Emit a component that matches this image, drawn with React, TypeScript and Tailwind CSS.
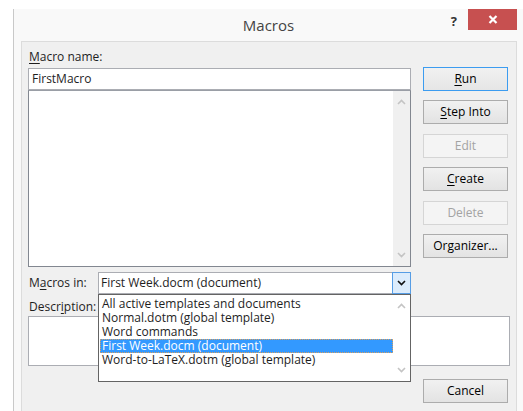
import type { ReactNode } from "react";

const FONT = { fontFamily: '"Open Sans", "Noto Sans", sans-serif' };

// access-key letter, drawn underlined like the Win32 dialogs do
function Key({ children }: { children: ReactNode }) {
  return <span className="underline underline-offset-2 decoration-1">{children}</span>;
}

function Chevron({ up, color = "#c4c4c4" }: { up?: boolean; color?: string }) {
  return (
    <svg width="9" height="6" viewBox="0 0 9 6">
      <path
        d={up ? "M1 5 L4.5 1.5 L8 5" : "M1 1 L4.5 4.5 L8 1"}
        fill="none"
        stroke={color}
        strokeWidth="1.6"
      />
    </svg>
  );
}

function DialogButton({
  children,
  disabled,
  primary,
  className = "",
}: {
  children: ReactNode;
  disabled?: boolean;
  primary?: boolean;
  className?: string;
}) {
  const tone = disabled
    ? "border-[#d5d5d5] bg-[#f4f4f4] text-[#a3a3a3]"
    : primary
      ? "border-[#3c9cf0] bg-gradient-to-b from-[#f1f1f1] to-[#e6e6e6] text-black"
      : "border-[#acacac] bg-gradient-to-b from-[#f1f1f1] to-[#e3e3e3] text-black";
  return (
    <button
      type="button"
      className={`h-[24px] w-[85px] flex items-center justify-center border text-[12px] leading-none ${tone} ${className}`}
    >
      {children}
    </button>
  );
}

function ScrollColumn({ className = "" }: { className?: string }) {
  return (
    <div className={`w-[17px] flex flex-col items-center justify-between py-[8px] ${className}`}>
      <Chevron up />
      <Chevron />
    </div>
  );
}

const locations = [
  "All active templates and documents",
  "Normal.dotm (global template)",
  "Word commands",
  "First Week.docm (document)",
  "Word-to-LaTeX.dotm (global template)",
];

export default function App() {
  return (
    <div className="w-[523px] h-[411px] overflow-hidden bg-white pt-[9px] pl-[13px] text-[#1e1e1e]" style={FONT}>
      <div className="h-full border-l border-[#c9c9c9] bg-[#f9f9f9] flex flex-col">
        {/* title bar */}
        <div className="relative h-[32px] shrink-0 flex items-start justify-end pr-[6px]">
          <div className="absolute inset-x-0 top-[5px] text-center text-[15px] text-[#444]">Macros</div>
          <span className="mt-[3px] mr-[11px] text-[13px] font-bold text-[#333]">?</span>
          <div className="w-[49px] h-[21px] bg-[#c75050] flex items-center justify-center">
            <svg width="10" height="9" viewBox="0 0 10 9">
              <path d="M1.5 1 L8.5 8 M8.5 1 L1.5 8" stroke="#fff" strokeWidth="2.2" />
            </svg>
          </div>
        </div>

        {/* dialog body */}
        <div className="ml-[7px] mr-[6px] flex-1 bg-[#f0f0f0] border-t border-x border-[#dcdcdc] pl-[6px] pt-[7px]">
          <div className="flex gap-[12px]">
            <div className="w-[383px] flex flex-col">
              <div className="h-[16px] leading-[16px] text-[12px] pl-[1px]">
                <Key>M</Key>acro name:
              </div>
              <div className="mt-[3px] h-[22px] border border-[#abadb3] bg-white flex items-center pl-[3px] text-[12px]">
                FirstMacro
              </div>
              <div className="h-[177px] border border-[#828790] border-t-[#9a9ea6] bg-white flex justify-end">
                <ScrollColumn className="bg-[#f0f0f0]" />
              </div>
            </div>

            <div className="mt-[18px] flex flex-col gap-[9.4px]">
              <DialogButton primary>
                <Key>R</Key>un
              </DialogButton>
              <DialogButton>
                <Key>S</Key>tep Into
              </DialogButton>
              <DialogButton disabled>Edit</DialogButton>
              <DialogButton>
                <Key>C</Key>reate
              </DialogButton>
              <DialogButton disabled>Delete</DialogButton>
              <DialogButton>
                Or<Key>g</Key>anizer...
              </DialogButton>
            </div>
          </div>

          {/* macro location */}
          <div className="mt-[5px] flex items-center">
            <div className="w-[70px] pl-[1px] text-[12px]">
              M<Key>a</Key>cros in:
            </div>
            <div className="relative w-[313px] h-[22px] border border-[#abadb3] bg-white flex items-center">
              <span className="flex-1 pl-[2px] text-[12px]">First Week.docm (document)</span>
              <div className="w-[19px] h-[22px] -mr-[1px] border border-[#569de5] bg-[#dcecfc] flex items-center justify-center">
                <Chevron color="#111" />
              </div>

              {/* open list */}
              <div className="absolute left-[-1px] top-[21px] z-10 w-[313px] h-[88px] border border-[#646464] bg-white flex">
                <div className="flex-1 pt-[2px] pl-[1px]">
                  {locations.map((name) => {
                    const picked = name === "First Week.docm (document)";
                    return (
                      <div
                        key={name}
                        className={`h-[14px] leading-[14px] pl-[2px] text-[12px] whitespace-nowrap ${
                          picked ? "bg-[#3399ff] text-white outline-1 outline-dotted outline-[#d9a060] -outline-offset-1" : ""
                        }`}
                      >
                        {name}
                      </div>
                    );
                  })}
                </div>
                <ScrollColumn className="py-[6px]" />
              </div>
            </div>
          </div>

          <div className="mt-[5px] h-[16px] leading-[16px] pl-[1px] text-[12px]">
            Descr<Key>i</Key>ption:
          </div>
          <div className="mt-[1px] w-[482px] h-[50px] border border-[#abadb3] bg-white" />

          <div className="mt-[13px] w-[480px] flex justify-end">
            <DialogButton className="w-[82px] h-[23px]">Cancel</DialogButton>
          </div>
        </div>
      </div>
    </div>
  );
}
